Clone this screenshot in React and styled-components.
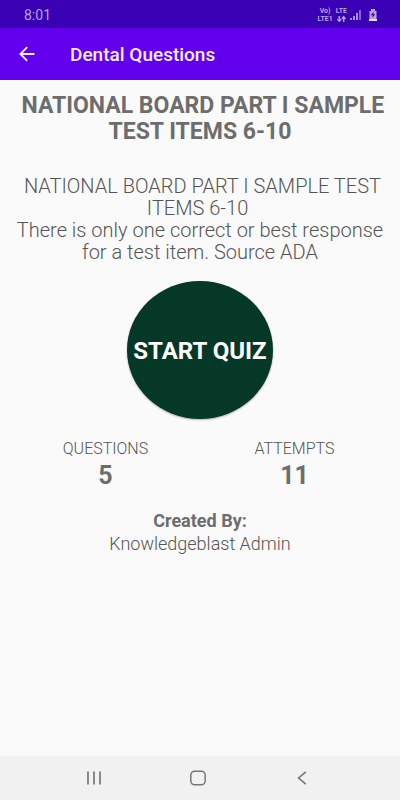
import React from "react";
import styled, { createGlobalStyle } from "styled-components";

const GlobalStyle = createGlobalStyle`
  * { box-sizing: border-box; }
  body {
    margin: 0;
    background: #fafafa;
    color: #6d6d6d;
    font-family: Roboto, "Liberation Sans", sans-serif;
  }
  h1, h2, p, dl, dt, dd { margin: 0; }
  button { font: inherit; border: 0; padding: 0; cursor: pointer; }
`;

const Screen = styled.div`
  display: flex;
  flex-direction: column;
  min-height: 100vh;
`;

const StatusBar = styled.div`
  display: flex;
  align-items: center;
  justify-content: space-between;
  height: 28px;
  padding: 2px 23px 0 24px;
  background: #3a00b4;
  color: #b9a3e6;
  font-size: 14px;
  line-height: 26px;
`;

const StatusIcons = styled.div`
  display: flex;
  align-items: center;
  gap: 3px;
`;

const NetworkLabel = styled.div`
  display: flex;
  flex-direction: column;
  align-items: center;
  font-size: 7px;
  font-weight: 700;
  line-height: 8px;
`;

const BatterySlot = styled.div`
  display: flex;
  margin-left: 4px;
`;

const AppBar = styled.header`
  display: flex;
  align-items: center;
  gap: 32px;
  height: 52px;
  padding: 0 16px;
  background: #6200ee;
  color: #f4ecff;
`;

const IconButton = styled.button`
  display: flex;
  align-items: center;
  justify-content: center;
  width: ${(p) => p.$size}px;
  height: ${(p) => p.$size}px;
  background: none;
  color: inherit;
`;

const BarTitle = styled.h1`
  padding-top: 2px;
  font-size: 19px;
  font-weight: 500;
  line-height: 24px;
`;

const Content = styled.main`
  display: flex;
  flex: 1;
  flex-direction: column;
  align-items: center;
  padding: 13px 11px;
  text-align: center;
`;

const QuizTitle = styled.h2`
  font-size: 23px;
  font-weight: 700;
  line-height: 26px;
`;

const Description = styled.p`
  margin-top: 30px;
  color: #555;
  font-size: 20px;
  font-weight: 300;
  line-height: 22px;
`;

const StartButton = styled.button`
  width: 146px;
  height: 138px;
  margin-top: 18px;
  flex-shrink: 0;
  border-radius: 50%;
  background: #053827;
  box-shadow: 0 1px 2px rgba(0, 0, 0, 0.3);
  color: #fff;
  && {
    padding-top: 2px;
    font-size: 24px;
    font-weight: 700;
    white-space: nowrap;
  }
`;

const Stats = styled.dl`
  display: grid;
  grid-template-columns: 1fr 1fr;
  width: 100%;
  margin-top: 20px;
`;

const StatLabel = styled.dt`
  color: #555;
  font-size: 16px;
  font-weight: 300;
  line-height: 20px;
`;

const StatValue = styled.dd`
  font-size: 25px;
  font-weight: 700;
  line-height: 34px;
`;

const Credit = styled.p`
  margin-top: 16px;
  color: #555;
  font-size: 18px;
  font-weight: 300;
  line-height: 23px;
`;

const CreditLabel = styled.strong`
  color: #6d6d6d;
  font-weight: 700;
`;

const NavBar = styled.nav`
  display: grid;
  grid-template-columns: 1fr 1fr 1fr;
  justify-items: center;
  align-items: center;
  height: 44px;
  padding: 0 46px 0 42px;
  background: #f1f1f1;
  color: #777;
`;

const stroke = { fill: "none", stroke: "currentColor" };

function SignalIcon() {
  return (
    <svg width="12" height="12" viewBox="0 0 12 12" fill="currentColor" aria-hidden="true">
      <path opacity=".9" d="M0 9h2v2H0zM3 7h2v4H3zM6 4h2v7H6z" />
      <path opacity=".6" d="M9 1h2v10H9z" />
    </svg>
  );
}

function BatteryIcon() {
  return (
    <svg width="8" height="12" viewBox="0 0 8 12" aria-hidden="true">
      <path fill="currentColor" d="M2 0h4v2h1.5v8h-7V2H2z" />
      <path fill="#3a00b4" d="M4.8 2.5 1.7 6.3h2L3.2 9l3.1-3.8h-2z" />
      <path fill="#e5dcfa" d="M0 10h8v2H0z" />
    </svg>
  );
}

function DataArrows() {
  return (
    <svg width="9" height="8" viewBox="0 -1 9 8" {...stroke} strokeWidth="1.5" aria-hidden="true">
      <path d="M2.3 0v5M.4 3.2 2.3 5.2l1.9-2M6.7 6V1M4.8 2.8l1.9-2 1.9 2" />
    </svg>
  );
}

function Stat({ label, value }) {
  return (
    <div>
      <StatLabel>{label}</StatLabel>
      <StatValue>{value}</StatValue>
    </div>
  );
}

export default function App() {
  return (
    <Screen>
      <GlobalStyle />
      <StatusBar>
        <span>8:01</span>
        <StatusIcons>
          <NetworkLabel>
            <span>Vo)</span>
            <span>LTE1</span>
          </NetworkLabel>
          <NetworkLabel>
            <span>LTE</span>
            <DataArrows />
          </NetworkLabel>
          <SignalIcon />
          <BatterySlot>
            <BatteryIcon />
          </BatterySlot>
        </StatusIcons>
      </StatusBar>
      <AppBar>
        <IconButton $size={22} type="button" aria-label="Back">
          <svg width="16" height="16" viewBox="0 0 16 16" {...stroke} strokeWidth="1.9" aria-hidden="true">
            <path d="M15.5 8H1.6M8.2 1.2 1.4 8l6.8 6.8" />
          </svg>
        </IconButton>
        <BarTitle>Dental Questions</BarTitle>
      </AppBar>
      <Content>
        <QuizTitle>{"\u00a0NATIONAL BOARD PART I SAMPLE TEST ITEMS 6-10"}</QuizTitle>
        <Description>
          {"\u00a0NATIONAL BOARD PART I SAMPLE TEST ITEMS 6-10\u00a0"}
          <br />
          There is only one correct or best response for a test item. Source ADA
        </Description>
        <StartButton type="button">START QUIZ</StartButton>
        <Stats>
          <Stat label="QUESTIONS" value="5" />
          <Stat label="ATTEMPTS" value="11" />
        </Stats>
        <Credit>
          <CreditLabel>Created By:</CreditLabel>
          <br />
          Knowledgeblast Admin
        </Credit>
      </Content>
      <NavBar>
        <IconButton $size={36} type="button" aria-label="Recent apps">
          <svg width="16" height="16" viewBox="0 0 16 16" {...stroke} strokeWidth="1.7" aria-hidden="true">
            <path d="M2 1.5v13M8 1.5v13M14 1.5v13" />
          </svg>
        </IconButton>
        <IconButton $size={36} type="button" aria-label="Home">
          <svg width="16" height="16" viewBox="0 0 16 16" {...stroke} strokeWidth="1.5" aria-hidden="true">
            <rect x=".8" y="1.2" width="14.4" height="13.6" rx="4" />
          </svg>
        </IconButton>
        <IconButton $size={36} type="button" aria-label="Back">
          <svg width="16" height="16" viewBox="0 0 16 16" {...stroke} strokeWidth="1.6" aria-hidden="true">
            <path d="M11.8 1.8 4.6 8l7.2 6.2" />
          </svg>
        </IconButton>
      </NavBar>
    </Screen>
  );
}
